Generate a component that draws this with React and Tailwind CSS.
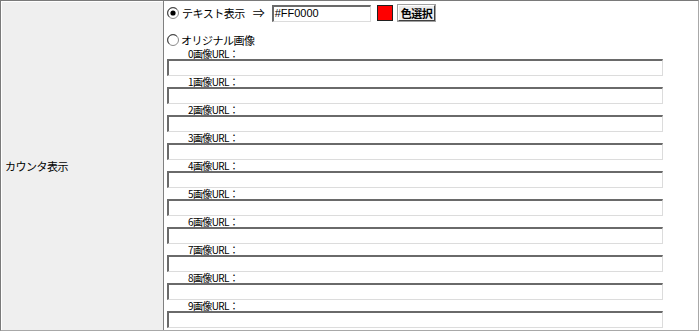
import React from 'react';

const jp = { fontFamily: '"Noto Sans CJK JP", "Liberation Sans", sans-serif' };

const Radio = ({ checked }) => (
    <svg width="12" height="12" viewBox="0 0 12 12" className="shrink-0">
        <circle cx="6" cy="6" r="5.5" fill="#fff" stroke="#8a8a8a" />
        <path d="M2.2 9.8A5 5 0 0 1 9.8 2.2" fill="none" stroke="#404040" strokeWidth="1" />
        {checked && <circle cx="6" cy="6" r="2.6" fill="#000" />}
    </svg>
);

const UrlField = ({ n }) => (
    <div>
        <div className="h-[11px] pl-[21px] text-[10px] leading-[11px] tracking-[-0.6px] text-black" style={jp}>
            {n}画像URL：
        </div>
        <div className="h-[17px] w-[496px] bg-white border-t-2 border-l-2 border-r border-b border-t-[#6a6a6a] border-l-[#6a6a6a] border-r-[#dcdcdc] border-b-[#dcdcdc]" />
    </div>
);

export default function App() {
    const nums = [0, 1, 2, 3, 4, 5, 6, 7, 8, 9];

    return (
        <div className="w-[700px] h-[332px] bg-white">
            <div className="flex w-[699px] h-[331px] border-t border-l border-t-[#7a7a7a] border-l-[#7a7a7a] border-r border-b border-r-[#a8a8a8] border-b-[#a8a8a8]">
                {/* label column */}
                <div className="w-[162px] flex items-center bg-[#efefef] pl-[3px] border-t border-l border-white">
                    <span className="text-[11px] tracking-[-0.5px] text-black" style={jp}>カウンタ表示</span>
                </div>

                {/* content column */}
                <div className="flex-1 border-l border-[#808080] pl-[3px]">
                    <div className="h-[24px] flex items-center text-black" style={jp}>
                        <Radio checked />
                        <span className="ml-[3px] text-[11px] tracking-[-0.5px]">テキスト表示</span>
                        <span className="ml-[8px] text-[12px]">⇒</span>
                        <div className="ml-[7px] h-[17px] w-[99px] bg-white border-t-2 border-l-2 border-r border-b border-t-[#6a6a6a] border-l-[#6a6a6a] border-r-[#dcdcdc] border-b-[#dcdcdc] pl-[1px] text-[11px] leading-[13px]" style={{ fontFamily: '"Liberation Sans", sans-serif' }}>
                            #FF0000
                        </div>
                        <div className="ml-[6px] h-[16px] w-[16px] bg-[#ff0000] border border-[#202020]" />
                        <div className="ml-[5px] h-[16px] px-[2px] flex items-center bg-[#ececec] border border-t-white border-l-white border-r-[#404040] border-b-[#404040] outline outline-1 outline-[#a0a0a0] text-[11px] font-bold leading-none tracking-[-0.5px]">
                            色選択
                        </div>
                    </div>
                    <div className="h-[9px]" />
                    <div className="h-[12px] mb-[2px] flex items-center text-black" style={jp}>
                        <Radio />
                        <span className="ml-[2px] text-[11px] leading-[11px] tracking-[-0.5px]">オリジナル画像</span>
                    </div>
                    {nums.map((n) => (
                        <UrlField key={n} n={n} />
                    ))}
                </div>
            </div>
        </div>
    );
}
